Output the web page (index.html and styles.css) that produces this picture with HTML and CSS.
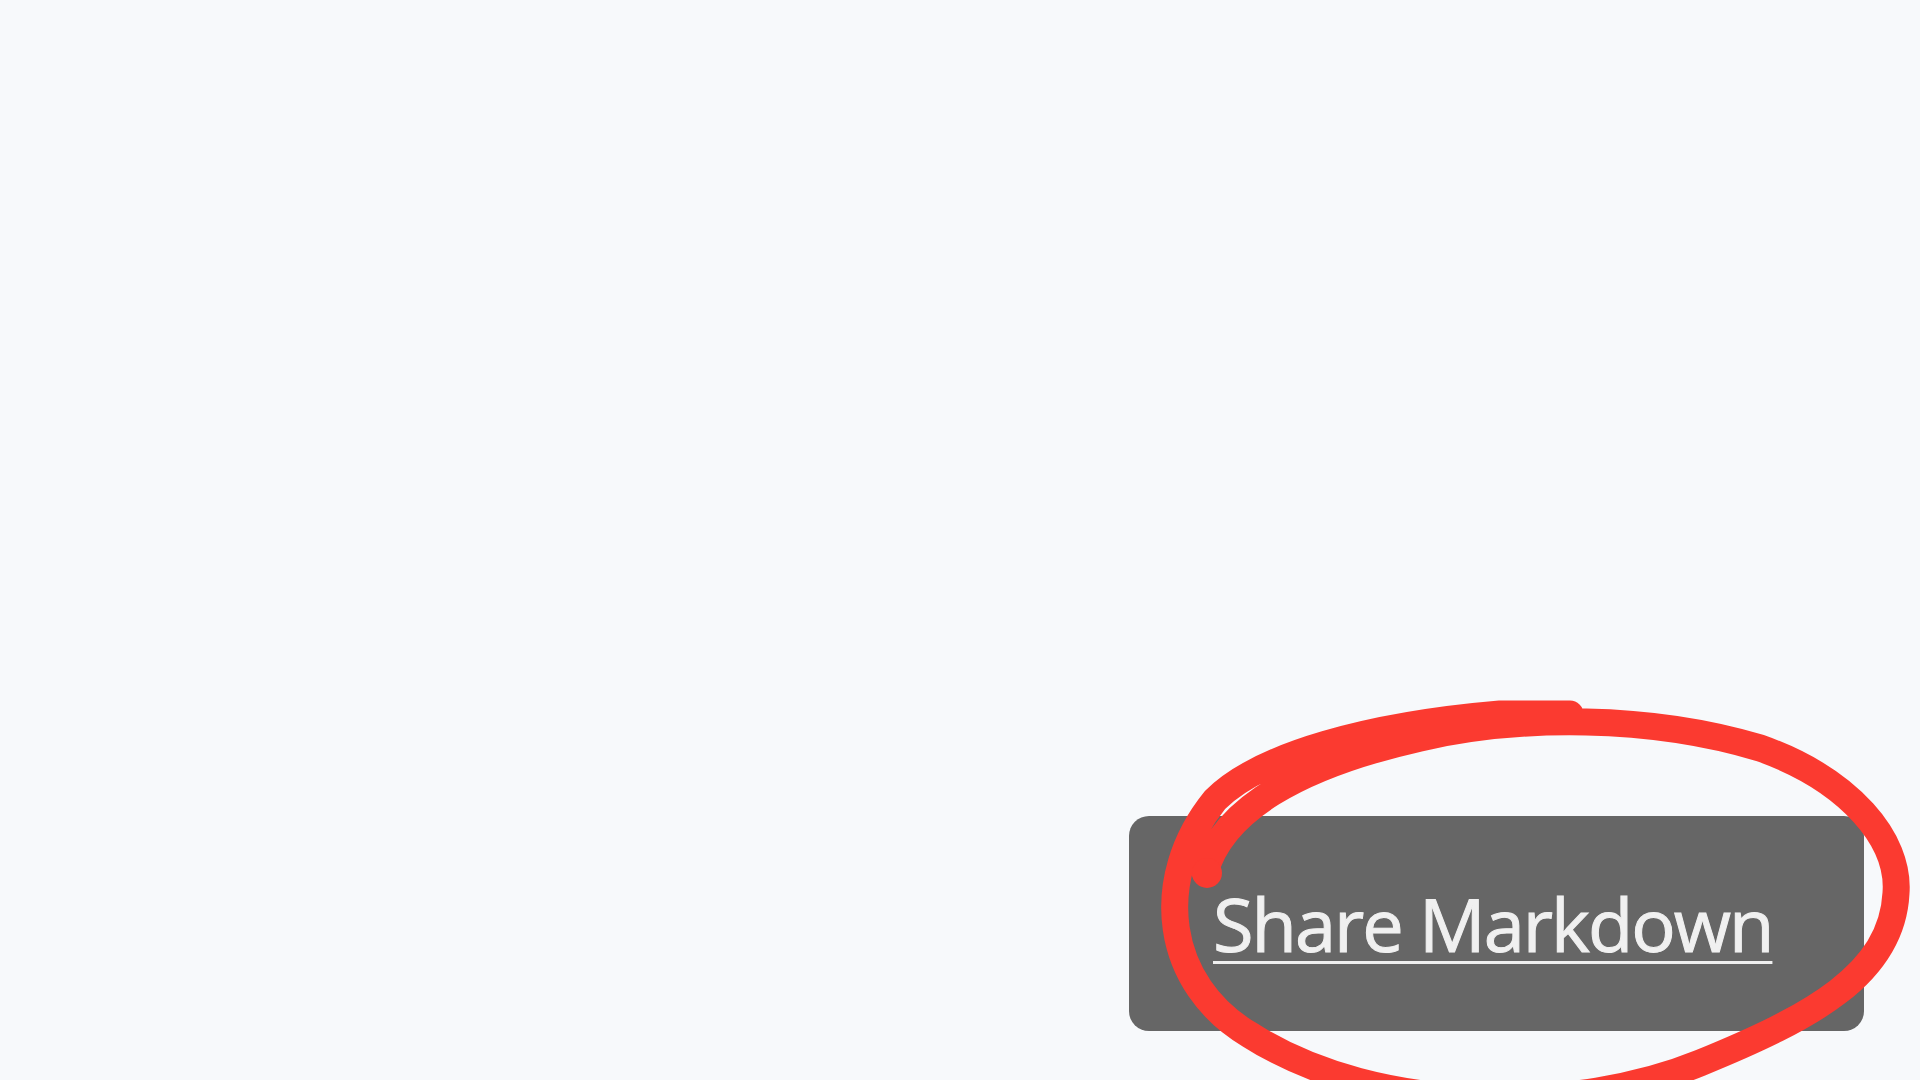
FILE: index.html
```html
<!DOCTYPE html>
<html lang="en">
<head>
<meta charset="utf-8">
<title>Share Markdown</title>
<link rel="stylesheet" href="styles.css">
</head>
<body>
<main class="page">
  <a class="share-btn" href="#"><span class="share-label">Share Markdown</span></a>
</main>
<svg class="annotation" viewBox="0 0 1920 1080" width="1920" height="1080" aria-hidden="true">
  <path class="scribble" d="M 1205 872
    C 1222 811, 1296 766, 1420 738
    C 1520 715, 1650 715, 1760 748
    C 1850 780, 1900 840, 1896 893
    C 1892 975, 1810 1018, 1700 1063
    C 1580 1112, 1380 1118, 1250 1035
    C 1165 985, 1150 880, 1215 800
    C 1260 755, 1370 725, 1500 714
    L 1570 714" />
  <circle class="blob" cx="1207" cy="873" r="15" />
</svg>
</body>
</html>
```
FILE: styles.css
```css
html, body {
  margin: 0;
  padding: 0;
  width: 1920px;
  height: 1080px;
  overflow: hidden;
  background: #f7f9fb;
}

.page {
  box-sizing: border-box;
  width: 1920px;
  height: 1080px;
  display: flex;
  justify-content: flex-end;
  align-items: flex-end;
  padding: 0 56px 49px 0;
}

.share-btn {
  box-sizing: border-box;
  width: 735px;
  height: 215px;
  display: flex;
  align-items: center;
  padding: 0 0 0 84px;
  background: #666666;
  border-radius: 20px;
  color: #f0f0f0;
  text-decoration: none;
}

.share-label {
  font-family: "Open Sans", "Noto Sans", sans-serif;
  font-size: 74px;
  font-weight: 400;
  letter-spacing: -2px;
  line-height: 1;
  color: #f0f0f0;
  -webkit-text-stroke: 1px #f0f0f0;
  text-decoration: underline;
  text-decoration-thickness: 3px;
  text-underline-offset: 9px;
}

.annotation {
  position: absolute;
  top: 0;
  left: 0;
  pointer-events: none;
}

.scribble {
  fill: none;
  stroke: #fb3a30;
  stroke-width: 27;
  stroke-linecap: round;
  stroke-linejoin: round;
}

.blob {
  fill: #fb3a30;
}
```
